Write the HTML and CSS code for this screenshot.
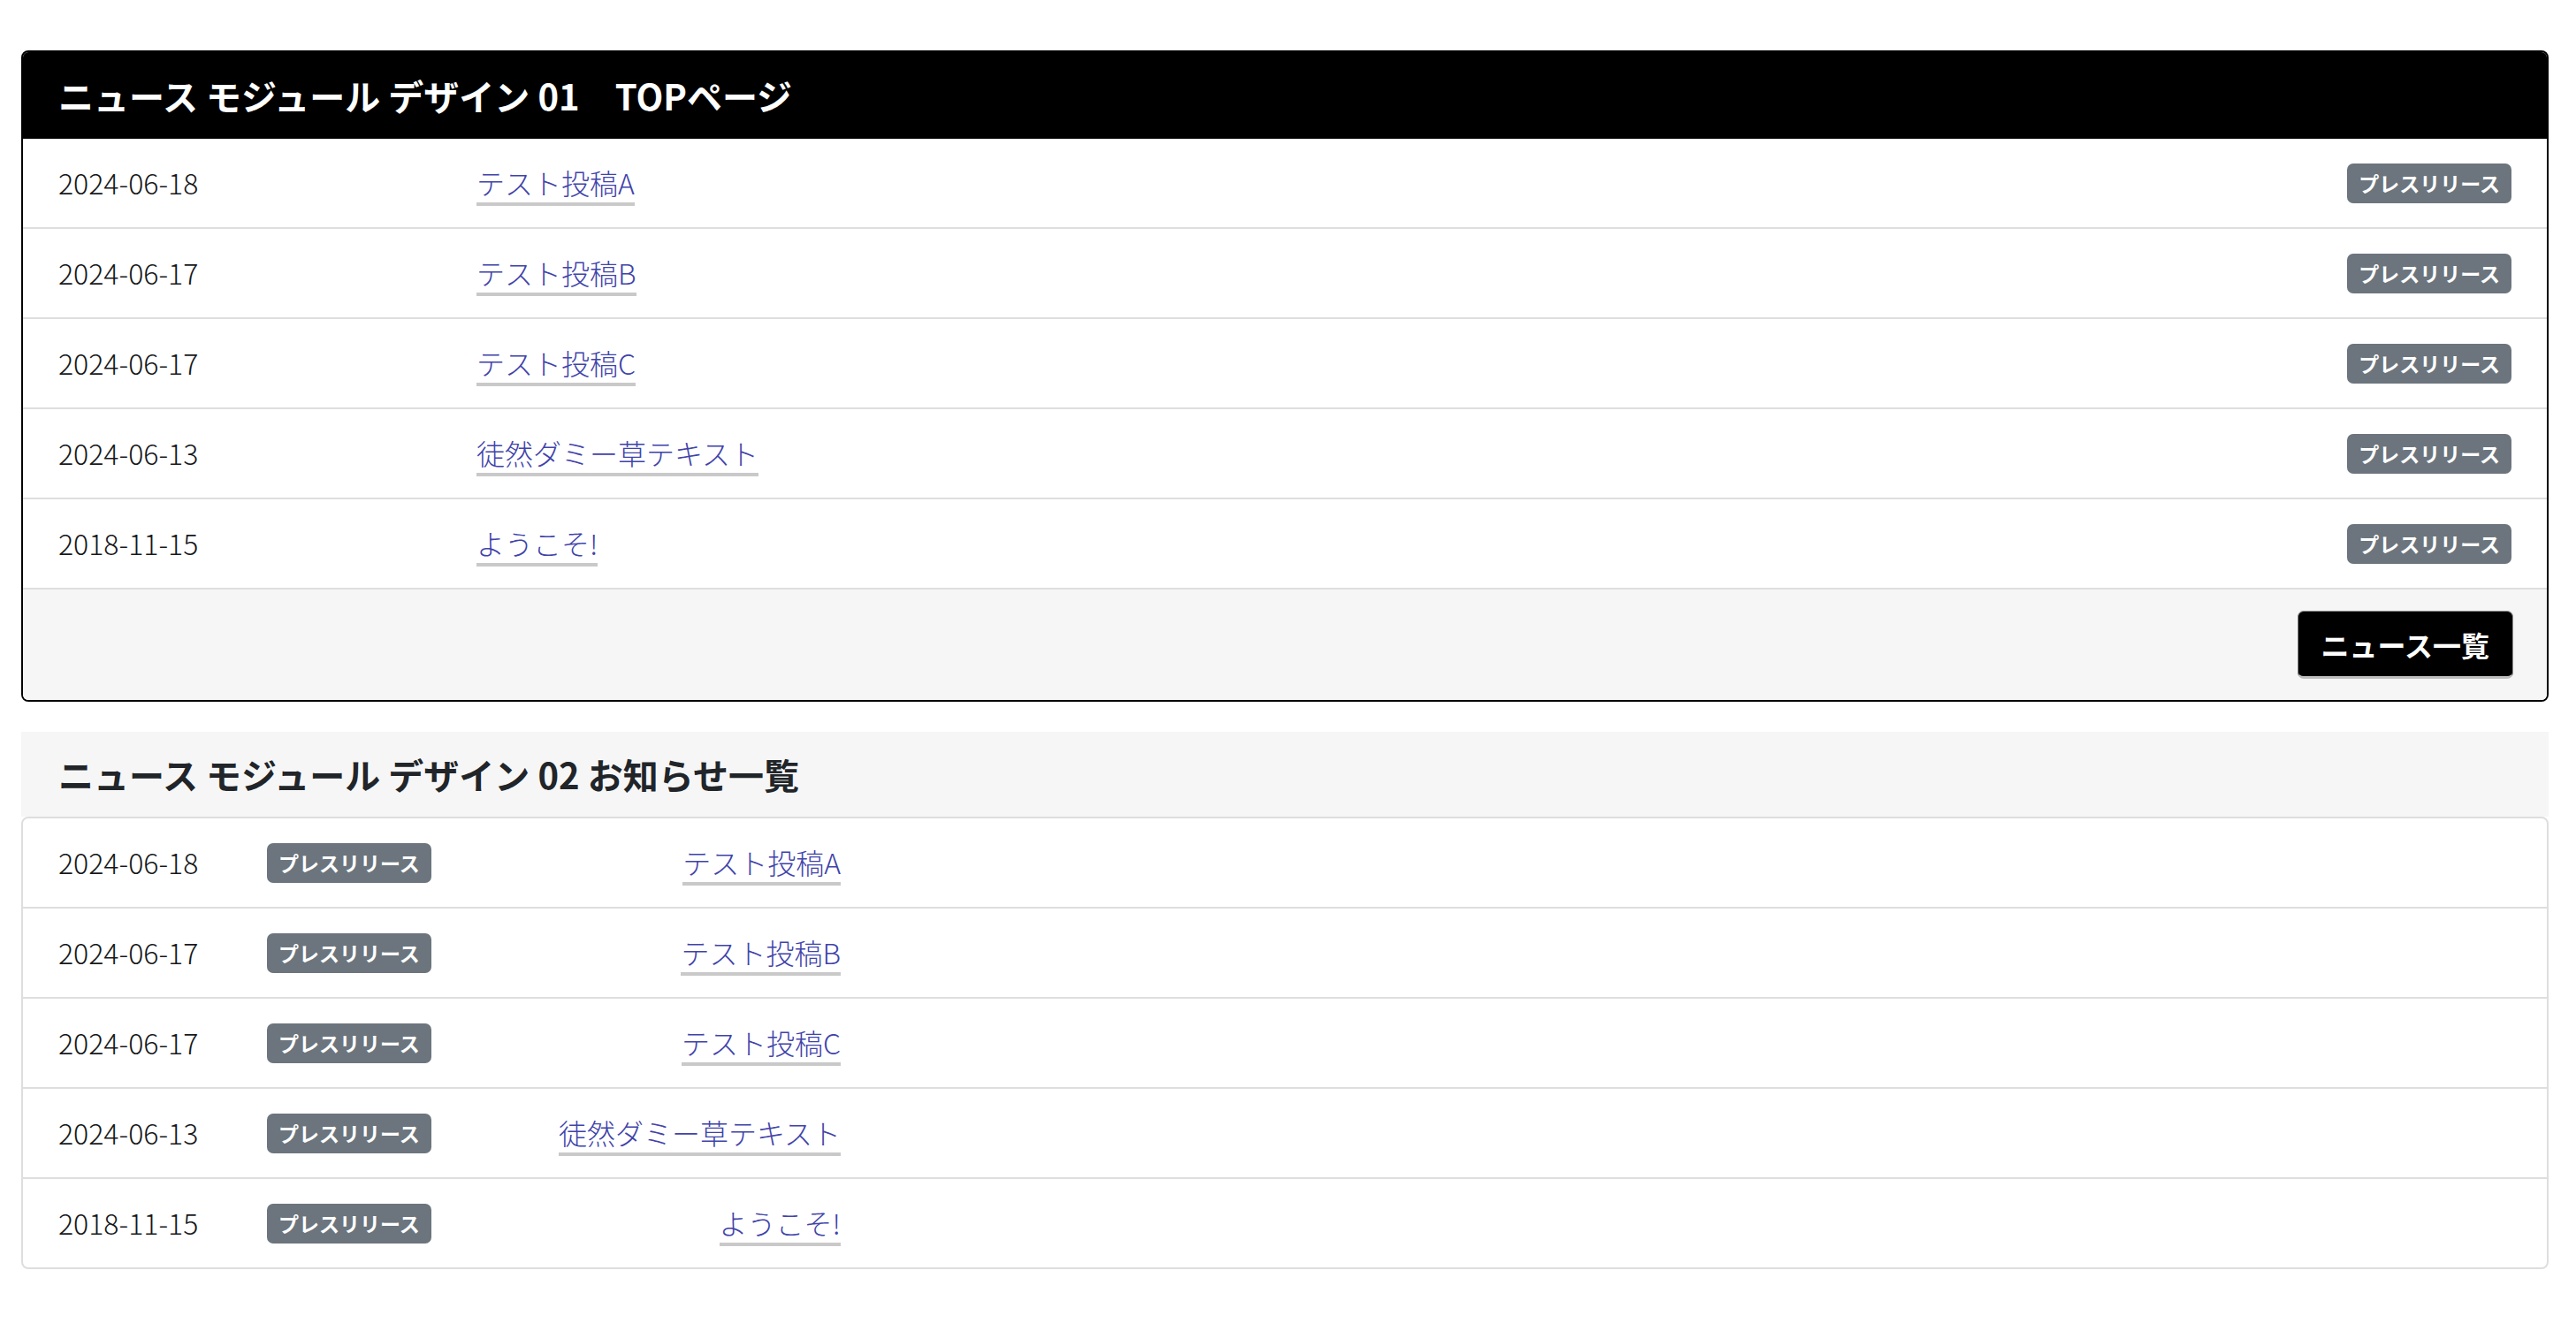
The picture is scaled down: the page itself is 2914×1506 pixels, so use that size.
FILE: index.html
```html
<!DOCTYPE html>
<html lang="ja">
<head>
<meta charset="utf-8">
<title>ニュース モジュール</title>
<link rel="stylesheet" href="styles.css">
</head>
<body>
<div class="page">
  <section class="news1">
    <h2 class="news1-title">ニュース モジュール デザイン 01　TOPページ</h2>
    <ul class="news1-list">
      <li class="news1-item"><span class="date">2024-06-18</span><span class="title-cell"><a class="link" href="#">テスト投稿A</a></span><span class="badge">プレスリリース</span></li>
      <li class="news1-item"><span class="date">2024-06-17</span><span class="title-cell"><a class="link" href="#">テスト投稿B</a></span><span class="badge">プレスリリース</span></li>
      <li class="news1-item"><span class="date">2024-06-17</span><span class="title-cell"><a class="link" href="#">テスト投稿C</a></span><span class="badge">プレスリリース</span></li>
      <li class="news1-item"><span class="date">2024-06-13</span><span class="title-cell"><a class="link" href="#">徒然ダミー草テキスト</a></span><span class="badge">プレスリリース</span></li>
      <li class="news1-item"><span class="date">2018-11-15</span><span class="title-cell"><a class="link" href="#">ようこそ!</a></span><span class="badge">プレスリリース</span></li>
    </ul>
    <div class="news1-footer"><a class="more-btn" href="#">ニュース一覧</a></div>
  </section>

  <section class="news2">
    <h2 class="news2-title">ニュース モジュール デザイン 02 お知らせ一覧</h2>
    <ul class="news2-list">
      <li class="news2-item"><span class="date">2024-06-18</span><span class="badge">プレスリリース</span><span class="title-cell right"><a class="link" href="#">テスト投稿A</a></span></li>
      <li class="news2-item"><span class="date">2024-06-17</span><span class="badge">プレスリリース</span><span class="title-cell right"><a class="link" href="#">テスト投稿B</a></span></li>
      <li class="news2-item"><span class="date">2024-06-17</span><span class="badge">プレスリリース</span><span class="title-cell right"><a class="link" href="#">テスト投稿C</a></span></li>
      <li class="news2-item"><span class="date">2024-06-13</span><span class="badge">プレスリリース</span><span class="title-cell right"><a class="link" href="#">徒然ダミー草テキスト</a></span></li>
      <li class="news2-item"><span class="date">2018-11-15</span><span class="badge">プレスリリース</span><span class="title-cell right"><a class="link" href="#">ようこそ!</a></span></li>
    </ul>
  </section>
</div>
</body>
</html>
```

FILE: styles.css
```css
* { box-sizing: border-box; }

html, body {
  margin: 0;
  padding: 0;
  background: #fff;
}

body {
  font-family: "Noto Sans CJK JP", "Noto Sans", sans-serif;
  color: #212529;
  font-size: 32px;
  line-height: 1.5;
}

.page {
  width: 2859px;
  margin-left: 24px;
  padding-top: 57px;
}

/* ---------- design 01 ---------- */
.news1 {
  border: 2px solid #000;
  border-radius: 8px;
  overflow: hidden;
}

.news1-title {
  margin: 0;
  background: #000;
  color: #fff;
  font-size: 40px;
  font-weight: 700;
  line-height: 60px;
  padding: 19px 40px;
}

.news1-list,
.news2-list {
  list-style: none;
  margin: 0;
  padding: 0;
}

.news1-item {
  display: grid;
  grid-template-columns: 473px 1fr auto;
  align-items: center;
  padding: 25px 40px 27px;
  border-bottom: 2px solid #dedede;
}

.date {
  color: #16181b;
  font-size: 32px;
  font-weight: 300;
  line-height: 48px;
}

.title-cell {
  line-height: 48px;
}

.title-cell.right {
  text-align: right;
}

.link {
  color: #3f43aa;
  text-decoration: none;
  font-size: 32px;
  font-weight: 300;
  border-bottom: 4px solid #c9c9c9;
}

.badge {
  display: inline-block;
  background: #6c757d;
  color: #fff;
  font-size: 23px;
  font-weight: 700;
  line-height: 1;
  padding: 11px 13px;
  border-radius: 7px;
  white-space: nowrap;
  margin-top: 2px;
}

.news1-footer {
  background: #f6f6f6;
  padding: 24px 38px 24px 40px;
  display: flex;
  justify-content: flex-end;
}

.more-btn {
  display: inline-block;
  background: #000;
  color: #fff;
  text-decoration: none;
  font-size: 32px;
  font-weight: 700;
  line-height: 46px;
  padding: 14px 26px 13px;
  border: 1px solid #8c8c8c;
  border-bottom: 3px solid #bdbdbd;
  border-radius: 7px;
}

/* ---------- design 02 ---------- */
.news2 {
  margin-top: 34px;
}

.news2-title {
  margin: 0;
  background: #f6f6f6;
  color: #212529;
  font-size: 40px;
  font-weight: 700;
  line-height: 60px;
  padding: 18px 42px;
}

.news2-list {
  border: 2px solid #dedede;
  border-radius: 8px;
}

.news2-item {
  display: grid;
  grid-template-columns: 236px 186px 463px 1fr;
  align-items: center;
  padding: 25px 40px 27px;
  border-bottom: 2px solid #dedede;
}

.news2-item:last-child {
  border-bottom: none;
}

.news2-item .badge {
  justify-self: start;
}
```
